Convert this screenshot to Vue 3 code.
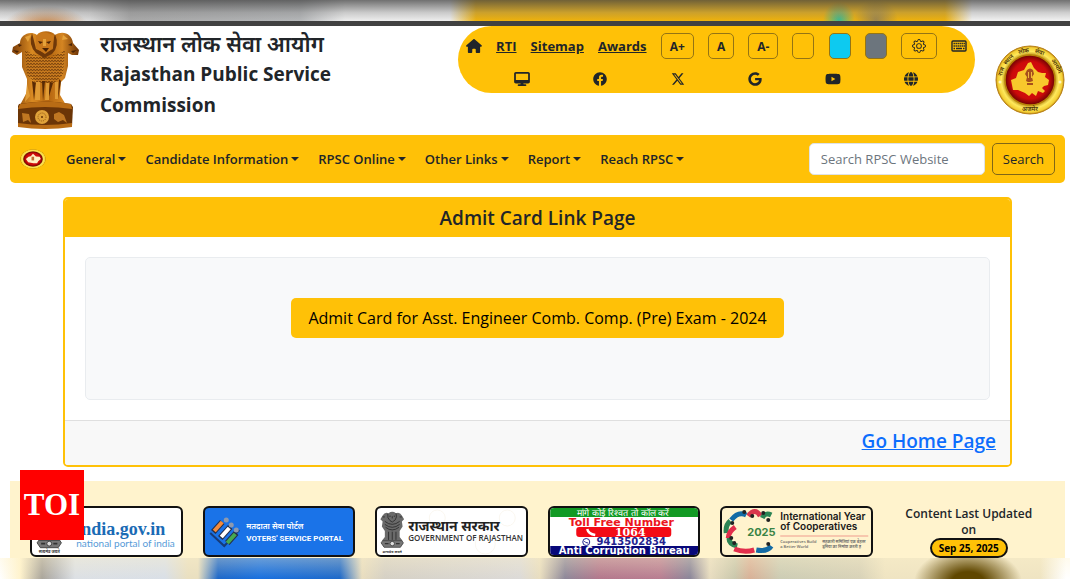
<!-- RPSC admit card page -->
<template>
  <div class="page">
    <svg class="defs" aria-hidden="true">
      <defs>
        <linearGradient id="gold" x1="0" x2="1">
          <stop offset="0" stop-color="#7c3d08" />
          <stop offset=".3" stop-color="#d98a22" />
          <stop offset=".55" stop-color="#b5660f" />
          <stop offset=".75" stop-color="#d48522" />
          <stop offset="1" stop-color="#6d3306" />
        </linearGradient>
        <radialGradient id="ring">
          <stop offset=".7" stop-color="#a87805" />
          <stop offset=".84" stop-color="#ffe95c" />
          <stop offset=".95" stop-color="#f4cf34" />
          <stop offset="1" stop-color="#b98410" />
        </radialGradient>
        <radialGradient id="ruby">
          <stop offset="0" stop-color="#e01212" />
          <stop offset=".75" stop-color="#cc0a0a" />
          <stop offset="1" stop-color="#6c0303" />
        </radialGradient>
        <pattern id="mane" width="3" height="3" patternUnits="userSpaceOnUse">
          <path d="M0 0l1.5 2L3 0" fill="none" stroke="#5f2f06" stroke-width=".7" />
        </pattern>
      </defs>
      <symbol id="emblem" viewBox="0 0 70 100">
        <path fill="url(#gold)" d="M10 13C10 5 20 0 27 5c3-5 15-5 18 0 8-5 17-1 18 8l6 7-1 5-6 0-4-2 0 13-3 12-4 4-1 13 6 10H10l7-13 0-13-5-12 0-15-5 3-5-3 1-5z" />
        <path fill="#6f3809" d="M22 3q-4 12 4 20l8 5 8-4q8-8 3-20-3 9-2 15l-8 4-9-4q-2-8-4-16z" />
        <path fill="#c9781b" d="M26 6q8-7 18 0l-1 12-8 6-9-6z" />
        <path fill="#4b2304" d="M28 11l5 1-3 2zm13 0l-5 1 3 2zM32 18h7l-3 4zM8 14l4 1-3 2zm54-1l-4 2 4 1zM3 20l6 1-2 2zm64 0l-6 1 2 2z" />
        <path fill="#e5a23a" d="M33 9h3v7h-3zM15 7l6-2-3 7zm38-2l5 4-6 1z" />
        <path fill="#c6791e" d="M17 24q18 10 36 0l-2 20-8 7H27l-8-7z" />
        <path fill="url(#mane)" d="M15 20q20 13 40 0l-2 25-9 8H26l-9-8z" />
        <path fill="#582a05" d="M22 51l2 19 2-17zm10 0l1 20 2-20zm8 1l-2 18 5-17zm9-3l-1 20 3-18z" />
        <path fill="#e09b35" d="M26 52l4 0 0 18h-5zm10 1h3l0 17h-4zm9-1l3 0 0 17-3 0zm-28 2l3 12-5 6z" />
        <path fill="#6b3507" d="M9 74q27-5 52 0l2 3-1 19q-27 4-54 0V76z" />
        <path fill="#b96c15" d="M10 74q26-5 51 0l1 5q-27-4-54 0zM8 93q27 4 54 0v4q-27 4-54 0z" />
        <circle cx="32" cy="87" r="7" fill="#e0a33a" />
        <circle cx="32" cy="87" r="4" fill="none" stroke="#8f5512" stroke-dasharray="1 1" />
        <circle cx="32" cy="87" r="1" fill="#613006" />
        <path fill="#c07722" d="M12 83l7 1 2 9-3-3-5 2zm32 1l5-2 5 3 3 8-4-3-5 2-4-3z" />
      </symbol>
      <symbol id="emblemInk" viewBox="0 0 34 58">
        <path fill="#6a6a6a" d="M4 6q3-5 8-3 5-4 10 0 5-2 8 3l3 5-3 3 1 7-4 6v8l4 5H3l4-5v-8l-4-6 1-7-3-3z" />
        <path fill="none" stroke="#222" d="M11 4q-1 6 3 9l3 2 4-3q3-4 1-9M13 7h2m4 0h2M17 7v3M4 8h3m20 0h3M7 14q10 8 20 0M7 18q10 8 20 0M8 22q9 7 18 0M12 28v11m5-11v11m5-11v11" />
        <path fill="#777" stroke="#333" d="M4 40h26l2 3-4 6H6l-4-6z" />
        <circle cx="17" cy="44" r="3" fill="#ddd" stroke="#333" />
        <path stroke="#333" stroke-width="2" d="M7 44h5m10 0h5" />
        <text x="17" y="56" text-anchor="middle" font-size="5" font-weight="700" fill="#333">सत्यमेव जयते</text>
      </symbol>
      <symbol id="seal" viewBox="0 0 70 70">
        <circle cx="35" cy="35" r="34" fill="url(#ring)" stroke="#ba8218" />
        <circle cx="35" cy="35" r="25" fill="url(#ruby)" stroke="#b78108" stroke-width="1.5" />
        <path fill="#f8c82c" d="M16 35l5-2 2-6 6-2 4-7 3-1 3 6 4 4 4 1 4 0-1 4 4 3-1 5-4 1-2 2 3 3-2 2-5-2-2 5-4-3-3 3-4-3-7-3-5 0-1-5z" />
        <path fill="#a64f1c" d="M32 25q3-3 6 0l1 4-2 3 1 4-3 1h-2l-2-1 1-4-2-3zm0 13h6v2h-6z" />
        <path fill="#f1b83c" d="M33 27h1v6h-1zm3 0h1v6h-1z" />
        <g fill="#4a3205" font-size="6" font-weight="600" text-anchor="middle">
          <text transform="translate(8 27) rotate(-72)">राज</text>
          <text transform="translate(15 16) rotate(-46)">स्थान</text>
          <text transform="translate(29 8) rotate(-12)">लोक</text>
          <text transform="translate(44 9) rotate(17)">सेवा</text>
          <text transform="translate(60 22) rotate(60)">आयोग</text>
          <text x="35" y="66">अजमेर</text>
        </g>
        <circle cx="5" cy="37" r="1.5" fill="#fff5bd" />
        <circle cx="65" cy="37" r="1.5" fill="#fff5bd" />
      </symbol>
    </svg>

    <div class="haze haze-top"></div>

    <header class="header">
      <svg class="emblem" role="img" aria-label="State Emblem of India"><use href="#emblem" /></svg>
      <h1 class="name">
        <span class="hindi">राजस्थान लोक सेवा आयोग</span>
        Rajasthan Public Service Commission
      </h1>
      <div class="tools">
        <div class="tool-row">
          <a href="#" class="home" aria-label="Home">
            <svg viewBox="0 0 576 512"><path :d="homeIcon" /></svg>
          </a>
          <a v-for="l in quickLinks" :key="l" href="#">{{ l }}</a>
          <button v-for="s in ['A+', 'A', 'A-']" :key="s" type="button">{{ s }}</button>
          <button v-for="c in swatches" :key="c" type="button" class="swatch" :class="c" :aria-label="c"></button>
          <button type="button" class="gear" aria-label="Settings">
            <svg viewBox="0 0 16 16"><path :d="gearIcon" /></svg>
          </button>
          <a href="#" class="keys" aria-label="Keyboard">
            <svg viewBox="0 0 16 12">
              <rect x="1" y="1" width="14" height="10" rx="1" fill="none" stroke="currentColor" stroke-width="1.4" />
              <path d="M2.5 3.5h11.5M2.5 6h11.5" fill="none" stroke="currentColor" stroke-width="1.5" stroke-dasharray="1.4 .6" />
              <path d="M2.5 8.5h1.5m1 0h6m1 0h1.5" stroke="currentColor" stroke-width="1.5" />
            </svg>
          </a>
        </div>
        <div class="social">
          <a v-for="s in social" :key="s.name" href="#" :aria-label="s.name">
            <svg :viewBox="s.box"><path :d="s.d" /></svg>
          </a>
        </div>
      </div>
      <svg class="seal" role="img" aria-label="RPSC"><use href="#seal" /></svg>
    </header>

    <nav class="nav">
      <a href="#" class="brand" aria-label="RPSC">
        <svg viewBox="0 0 70 70" preserveAspectRatio="none">
          <circle cx="35" cy="35" r="34" fill="url(#ring)" />
          <circle cx="35" cy="35" r="26" fill="url(#ruby)" />
          <path fill="#fff0c4" d="M16 35l7-8 6-2 6-8 8 9 10 1 3 8-7 8-3 7-10 0-14-4z" />
          <path fill="#c06a32" d="M31 27h7v13h-7z" />
        </svg>
      </a>
      <button v-for="m in menus" :key="m" type="button" class="menu">{{ m }}</button>
      <form class="search" @submit.prevent>
        <input v-model="query" type="search" placeholder="Search RPSC Website" aria-label="Search RPSC Website" />
        <button type="submit">Search</button>
      </form>
    </nav>

    <main class="card">
      <h2 class="card-head">Admit Card Link Page</h2>
      <div class="card-body">
        <div class="well">
          <a href="#" class="admit">Admit Card for Asst. Engineer Comb. Comp. (Pre) Exam - 2024</a>
        </div>
      </div>
      <div class="card-foot"><a href="#">Go Home Page</a></div>
    </main>

    <footer class="footer">
      <a href="#" class="badge white" aria-label="india.gov.in">
        <svg viewBox="0 0 148 47">
          <use href="#emblemInk" x="3" y="0" width="28" height="47" />
          <text x="44" y="27" class="serif" font-size="18" font-weight="700" fill="#1a6bb5">india.gov.in</text>
          <text x="44" y="39" class="light" font-size="10" fill="#579bd8">national portal of india</text>
        </svg>
      </a>
      <a href="#" class="badge blue" aria-label="Voters' Service Portal">
        <svg viewBox="0 0 148 47">
          <path fill="none" stroke="#173b78" stroke-width="2" d="M5 25l14 13 15-16" />
          <path stroke="#25304b" stroke-width="6" d="M8 24l9-10m-2 16l10-11m-3 16l9-10" />
          <path stroke="#f48b3c" stroke-width="4" d="M9 23l8-9" />
          <path stroke="#fff" stroke-width="4" d="M16 29l8-9" />
          <path stroke="#45aa52" stroke-width="4" d="M22 35l8-9" />
          <g fill="#8d99ae"><circle cx="21" cy="12" r="2.5" /><circle cx="26" cy="17" r="2.5" /><circle cx="31" cy="22" r="2.5" /></g>
          <text x="41" y="21" font-size="8" font-weight="600" fill="#fff">मतदाता सेवा पोर्टल</text>
          <text x="41" y="33" class="roboto" font-size="8" font-weight="700" fill="#fff">VOTERS' SERVICE PORTAL</text>
        </svg>
      </a>
      <a href="#" class="badge white" aria-label="Government of Rajasthan">
        <svg viewBox="0 0 148 47">
          <g fill="none" stroke="#faf7f0"><circle cx="60" cy="10" r="8" /><circle cx="108" cy="36" r="10" /><circle cx="130" cy="10" r="8" /></g>
          <use href="#emblemInk" x="1" y="3" width="28" height="43" />
          <text x="31" y="23" font-size="14" font-weight="700" fill="#222">राजस्थान सरकार</text>
          <text x="31" y="33" font-size="8" font-weight="600" fill="#333">GOVERNMENT OF RAJASTHAN</text>
        </svg>
      </a>
      <a href="#" class="badge white" aria-label="Anti Corruption Bureau">
        <svg viewBox="0 0 148 47" class="wide">
          <path fill="#129a24" d="M0 0h148v9H0z" />
          <path fill="#08087a" d="M0 38h148v10H0z" />
          <rect x="26" y="19" width="95" height="10" rx="3" fill="#f30b16" />
          <g text-anchor="middle" font-weight="700">
            <text x="73" y="8" font-size="9" font-weight="500" fill="#fff">मांगे कोई रिश्वत तो कॉल करें</text>
            <text x="71" y="18" font-size="11" fill="#ec1520">Toll Free Number</text>
            <text x="80" y="28" class="slab" font-size="11" fill="#fff">1064</text>
            <text x="81" y="37" font-size="10" fill="#24248f">9413502834</text>
            <text x="74" y="46" font-size="10" fill="#fff">Anti Corruption Bureau</text>
          </g>
          <path fill="none" stroke="#fff" stroke-width="2.5" d="M37 21q1 5 8 6" />
          <circle cx="36" cy="34" r="3.5" fill="none" stroke="#24248f" />
          <path fill="none" stroke="#24248f" d="M34 33q1 2 4 2" />
        </svg>
      </a>
      <a href="#" class="badge" aria-label="International Year of Cooperatives">
        <svg viewBox="0 0 148 47">
          <g fill="none" stroke-width="5">
            <path stroke="#d9374d" d="M26 8q7-9 12 0" />
            <path stroke="#136ba5" d="M9 12q7-9 15-5" />
            <path stroke="#2c8454" d="M40 10q3-6 9-3M4 25q-1-8 4-12M7 30q-1 6 8 8" />
            <path stroke="#e22e4c" d="M13 19q-7 5-7 11M12 41q10 4 20 1" />
            <path stroke="#136ba5" d="M34 42q11 2 15-4" />
          </g>
          <g fill="#222"><circle cx="10" cy="15" r="2" /><circle cx="22" cy="4" r="2" /><circle cx="30" cy="8" r="2" /><circle cx="41" cy="5" r="2" /><circle cx="46" cy="12" r="2" /><circle cx="9" cy="30" r="2" /><circle cx="12" cy="35" r="2" /><circle cx="46" cy="36" r="2" /></g>
          <text x="25" y="28" font-size="11" font-weight="700" class="inter" fill="#398345">2025</text>
          <g class="inter" font-size="10" font-weight="600" fill="#181818">
            <text x="58" y="12">International Year</text>
            <text x="58" y="22">of Cooperatives</text>
          </g>
          <path stroke="#ef9b8e" d="M58 28h88" />
          <g font-size="4" font-weight="600" fill="#666">
            <text x="58" y="35">Cooperatives Build</text>
            <text x="58" y="40">a Better World</text>
            <text x="100" y="35">सहकारी समितियां एक बेहतर</text>
            <text x="100" y="40">दुनिया का निर्माण करती हैं</text>
          </g>
        </svg>
      </a>
      <div class="updated">
        <span>Content Last Updated on</span>
        <span class="date">Sep 25, 2025</span>
      </div>
    </footer>

    <div class="haze haze-bottom"></div>

    <div class="toi">TOI</div>
  </div>
</template>

<script setup>
import { ref } from "vue";

const query = ref("");
const quickLinks = ["RTI", "Sitemap", "Awards"];
const swatches = ["yellow", "cyan", "grey"];
const menus = ["General", "Candidate Information", "RPSC Online", "Other Links", "Report", "Reach RPSC"];

const homeIcon = "M575.8 255.5c0 18-15 32.1-32 32.1h-32l.7 160.2V472c0 22.1-17.9 40-40 40H392c-22.1 0-40-17.9-40-40v-88c0-17.7-14.3-32-32-32h-64c-17.7 0-32 14.3-32 32v88c0 22.1-17.9 40-40 40h-80c-22.1 0-40-17.9-40-40V287.6H32c-18 0-32-14-32-32.1 0-9 3-17 10-24L266.4 8c7-7 15-8 22-8s15 2 21 7l255.4 224.5c8 7 12 15 11 24z";
const gearIcon = "M8 4.754a3.246 3.246 0 1 0 0 6.492 3.246 3.246 0 0 0 0-6.492M5.754 8a2.246 2.246 0 1 1 4.492 0 2.246 2.246 0 0 1-4.492 0M9.796 1.343c-.527-1.79-3.065-1.79-3.592 0l-.094.319a.873.873 0 0 1-1.255.52l-.292-.16c-1.64-.892-3.433.902-2.54 2.541l.159.292a.873.873 0 0 1-.52 1.255l-.319.094c-1.79.527-1.79 3.065 0 3.592l.319.094a.873.873 0 0 1 .52 1.255l-.16.292c-.892 1.64.901 3.434 2.541 2.54l.292-.159a.873.873 0 0 1 1.255.52l.094.319c.527 1.79 3.065 1.79 3.592 0l.094-.319a.873.873 0 0 1 1.255-.52l.292.16c1.64.893 3.434-.902 2.54-2.541l-.159-.292a.873.873 0 0 1 .52-1.255l.319-.094c1.79-.527 1.79-3.065 0-3.592l-.319-.094a.873.873 0 0 1-.52-1.255l.16-.292c.893-1.64-.902-3.433-2.541-2.54l-.292.159a.873.873 0 0 1-1.255-.52zm-2.633.283c.246-.835 1.428-.835 1.674 0l.094.319a1.873 1.873 0 0 0 2.693 1.115l.291-.16c.764-.415 1.6.42 1.184 1.185l-.159.292a1.873 1.873 0 0 0 1.116 2.692l.318.094c.835.246.835 1.428 0 1.674l-.319.094a1.873 1.873 0 0 0-1.115 2.693l.16.291c.415.764-.42 1.6-1.185 1.184l-.291-.159a1.873 1.873 0 0 0-2.693 1.116l-.094.318c-.246.835-1.428.835-1.674 0l-.094-.319a1.873 1.873 0 0 0-2.692-1.115l-.292.16c-.764.415-1.6-.42-1.184-1.185l.159-.291A1.873 1.873 0 0 0 1.945 8.93l-.319-.094c-.835-.246-.835-1.428 0-1.674l.319-.094A1.873 1.873 0 0 0 3.06 4.377l-.16-.292c-.415-.764.42-1.6 1.185-1.184l.292.159a1.873 1.873 0 0 0 2.692-1.115z";

const social = [
  { name: "Screen reader", box: "0 0 576 512", d: "M64 0C28.7 0 0 28.7 0 64v288c0 35.3 28.7 64 64 64h176l-10.7 32H160c-17.7 0-32 14.3-32 32s14.3 32 32 32h256c17.7 0 32-14.3 32-32s-14.3-32-32-32h-69.3L336 416h176c35.3 0 64-28.7 64-64V64c0-35.3-28.7-64-64-64H64zM512 64v224H64V64h448z" },
  { name: "Facebook", box: "0 0 512 512", d: "M504 256C504 119 393 8 256 8S8 119 8 256c0 123.78 90.69 226.38 209.25 245V327.69h-63V256h63v-54.64c0-62.15 37-96.48 93.67-96.48 27.14 0 55.52 4.84 55.52 4.84v61h-31.28c-30.8 0-40.41 19.12-40.41 38.73V256h68.78l-11 71.69h-57.78V501C413.31 482.38 504 379.78 504 256z" },
  { name: "X", box: "-1 -1 18 18", d: "M12.6.75h2.454l-5.36 6.142L16 15.25h-4.937l-3.867-5.07-4.425 5.07H.316l5.733-6.57L0 .75h5.063l3.495 4.633L12.601.75Zm-.86 13.028h1.36L4.323 2.145H2.865z" },
  { name: "Google", box: "-12 0 512 512", d: "M488 261.8C488 403.3 391.1 504 248 504 110.8 504 0 393.2 0 256S110.8 8 248 8c66.8 0 123 24.5 166.3 64.9l-67.5 64.9C258.5 52.6 94.3 116.6 94.3 256c0 86.5 69.1 156.6 153.7 156.6 98.2 0 135-70.4 140.8-106.9H248v-85.3h236.1c2.3 12.7 3.9 24.9 3.9 41.4z" },
  { name: "YouTube", box: "0 0 576 512", d: "M549.655 124.083c-6.281-23.65-24.787-42.276-48.284-48.597C458.781 64 288 64 288 64S117.22 64 74.629 75.486c-23.497 6.322-42.003 24.947-48.284 48.597-11.412 42.867-11.412 132.305-11.412 132.305s0 89.438 11.412 132.305c6.281 23.65 24.787 41.5 48.284 47.821C117.22 448 288 448 288 448s170.78 0 213.371-11.486c23.497-6.321 42.003-24.171 48.284-47.821 11.412-42.867 11.412-132.305 11.412-132.305s0-89.438-11.412-132.305zm-317.51 213.508V175.185l142.739 81.205-142.739 81.201z" },
  { name: "Website", box: "0 0 512 512", d: "M352 256c0 22.2-1.2 43.6-3.3 64H163.3c-2.2-20.4-3.3-41.8-3.3-64s1.2-43.6 3.3-64H348.7c2.2 20.4 3.3 41.8 3.3 64zm28.8-64H503.9c5.3 20.5 8.1 41.9 8.1 64s-2.8 43.5-8.1 64H380.8c2.1-20.6 3.2-42 3.2-64s-1.1-43.4-3.2-64zm112.6-32H376.7c-10-63.9-29.8-117.4-55.3-151.6c78.3 20.7 142 77.5 171.9 151.6zm-149.1 0H167.7c6.1-36.4 15.5-68.6 27-94.7c10.5-23.6 22.2-40.7 33.5-51.5C239.4 3.2 248.7 0 256 0s16.6 3.2 27.8 13.8c11.3 10.8 23 27.9 33.5 51.5c11.6 26 20.9 58.2 27 94.7zm-209 0H18.6C48.6 85.9 112.2 29.1 190.6 8.4C165.1 42.6 145.3 96.1 135.3 160zM8.1 192H131.2c-2.1 20.6-3.2 42-3.2 64s1.1 43.4 3.2 64H8.1C2.8 299.5 0 278.1 0 256s2.8-43.5 8.1-64zM194.7 446.6c-11.6-26-20.9-58.2-27-94.6H344.3c-6.1 36.4-15.5 68.6-27 94.6c-10.5 23.6-22.2 40.7-33.5 51.5C272.6 508.8 263.3 512 256 512s-16.6-3.2-27.8-13.8c-11.3-10.8-23-27.9-33.5-51.5zM135.3 352c10 63.9 29.8 117.4 55.3 151.6C112.2 482.9 48.6 426.1 18.6 352H135.3zm358.1 0c-30 74.1-93.6 130.9-171.9 151.6c25.5-34.2 45.2-87.7 55.3-151.6H493.4z" },
];
</script>

<style>
body { background: #fff; }
</style>

<style scoped>
.page { position: relative; font-family: "Open Sans", "Noto Sans", sans-serif; color: #212529; font-size: 13px; }
.page *, .page { box-sizing: border-box; }
.page button, .page input { font-family: inherit; color: inherit; }
.defs { position: absolute; width: 0; height: 0; }
a { color: inherit; }

/* blurred strips above and below the page */
.haze { height: 21px; }
.haze-top {
  height: 26px;
  border-bottom: 5px solid #414141;
  background:
    linear-gradient(rgba(70, 70, 70, .75), rgba(120, 120, 120, .3) 60%, rgba(150, 150, 150, 0)),
    radial-gradient(ellipse 42px 20px at 46px 26px, #c47a36, transparent),
    radial-gradient(ellipse 16px 18px at 839px 20px, #3bb991, transparent),
    radial-gradient(ellipse 22px 20px at 876px 20px, #9f8649, transparent),
    linear-gradient(90deg, #eee 0, #ddd 90px, #a9a9a9 130px, #b5b7b9 300px, #eee 345px, #eee 450px, #efb20b 476px, #efb20b 945px, #f3f3f3 972px);
}
.haze-bottom {
  background:
    radial-gradient(ellipse 54px 34px at 968px 24px, #604700 30%, transparent),
    linear-gradient(rgba(255, 243, 205, .35), rgba(255, 243, 205, 0)),
    linear-gradient(90deg, #fff 0, #fff3cd 20px, #aaa59b 42px, #bbb 56px, #dce0e5 75px, #d9dfe7 165px, #e9dfc0 188px, #e9dfc0 198px, #1c67c9 218px, #176fdf 260px, #1c68c9 340px, #e8ddbf 362px, #d5d0c5 385px, #dcdad8 520px, #e8ddbf 540px, #8d8799 565px, #b3778c 600px, #b87d91 660px, #8a8599 690px, #e7dcc0 710px, #c9c7ac 735px, #d8b097 750px, #ccccb4 780px, #d8d2b8 860px, #efe4c2 885px, #efe4c2 1040px, #fff 1066px);
}

.header { display: flex; height: 109px; padding: 0 5px 0 10px; }
.emblem { width: 70px; height: 100px; margin-top: 4px; flex: none; }
.name { width: 270px; margin: 2px 0 0 20px; font-size: 19px; line-height: 31px; font-weight: 700; }
.hindi { display: block; font-size: 22px; font-weight: 600; white-space: nowrap; }
.tools { flex: none; width: 517px; height: 67px; margin-left: auto; border-radius: 34px; background: #ffc107; }
.tool-row { display: flex; align-items: center; justify-content: space-between; height: 40px; padding: 0 8px; font-weight: 700; }
.tool-row button { display: grid; place-items: center; height: 26px; padding: 0 8px; background: transparent; border: 1px solid #947414; border-radius: 5px; font-size: 12px; font-weight: 700; }
.tool-row svg { display: block; fill: currentColor; }
.home svg { width: 16px; height: 14px; }
.tool-row .swatch { width: 22px; padding: 0; }
.tool-row .cyan { background: #0dcaf0; }
.tool-row .grey { background: #6c757d; }
.tool-row .gear { width: 36px; }
.gear svg { width: 14px; height: 14px; }
.keys svg { width: 16px; height: 12px; }
.social { display: flex; justify-content: space-around; padding: 6px 25px 0; }
.social svg { display: block; width: 16px; height: 14px; fill: currentColor; }
.seal { width: 70px; height: 70px; margin: 19px 0 0 20px; flex: none; }

.nav { display: flex; align-items: center; height: 48px; margin: 0 5px 0 10px; padding: 0 10px; border-radius: 5px; background: #ffc107; }
.brand { margin-right: 12px; }
.brand svg { display: block; width: 26px; height: 20px; }
.menu { display: flex; align-items: center; padding: 0 8px; margin-right: 3px; border: 0; background: none; font-size: 13px; line-height: 20px; font-weight: 600; white-space: nowrap; }
.menu::after { content: ""; margin-left: 3px; border: 4px solid transparent; border-top-color: currentColor; border-bottom: 0; }
.search { display: flex; gap: 7px; margin-left: auto; }
.search input { width: 176px; height: 32px; padding: 0 11px; border: 1px solid #dee2e6; border-radius: 5px; background: #fff; font-size: 13px; }
.search input::placeholder { color: #6c757d; }
.search button { height: 32px; padding: 0 10px; border: 1px solid #806617; border-radius: 5px; background: none; font-size: 13px; font-weight: 400; }

.card { margin: 14px 58px 0 63px; border: 2px solid #ffc107; border-radius: 5px; overflow: hidden; }
.card-head { margin: 0; padding: 5px 0 4px; background: #ffc107; text-align: center; font-size: 19px; line-height: 29px; font-weight: 600; }
.card-body { padding: 20px; }
.well { display: grid; place-items: start center; height: 143px; padding-top: 40px; border: 1px solid #e9ecef; border-radius: 5px; background: #f8f9fa; }
.admit { padding: 8px 17px; border-radius: 5px; background: #ffc107; color: #000; font-size: 16px; line-height: 24px; text-decoration: none; }
.card-foot { padding: 6px 14px 9px; border-top: 1px solid #dfdfdf; background: #f8f8f8; text-align: right; font-size: 19px; line-height: 29px; font-weight: 600; }
.card-foot a { color: #0d6efd; }

.footer { display: grid; grid-template-columns: repeat(6, 1fr); gap: 20px; margin: 14px 5px 0 10px; padding: 25px 20px 1px; background: #fff3cd; }
.badge { display: block; height: 51px; border: 2px solid #111; border-radius: 6px; overflow: hidden; }
.badge svg { display: block; width: 100%; height: 100%; }
.white { background: #fff; }
.blue { background: #1a73e8; }
.serif { font-family: "Liberation Serif", serif; }
.light { font-family: Lato, "Noto Sans", sans-serif; }
.roboto { font-family: Roboto, sans-serif; }
.inter { font-family: Inter, sans-serif; }
.wide { font-family: "DejaVu Sans", sans-serif; }
.slab { font-family: "DejaVu Serif", serif; }
.updated { display: flex; flex-direction: column; align-items: center; height: 51px; padding: 0 7px; font-size: 12px; line-height: 16px; font-weight: 600; text-align: center; }
.date { flex: none; padding: 0 7px; border: 2px solid #111; border-radius: 10px; background: #ffc107; color: #000; font-size: 10px; line-height: 16px; font-weight: 700; }

.toi { position: absolute; left: 20px; top: 470px; display: grid; place-items: center; width: 64px; height: 70px; background: #f00; color: #fff; font-family: "Liberation Serif", serif; font-size: 31px; font-weight: 700; }
</style>
